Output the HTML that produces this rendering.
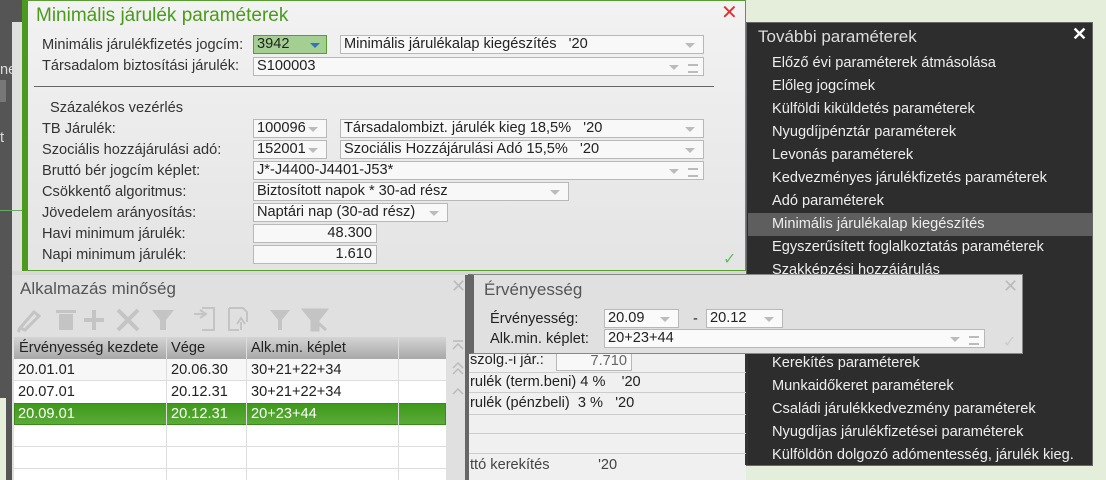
<!DOCTYPE html>
<html><head><meta charset="utf-8"><style>
*{box-sizing:border-box;margin:0;padding:0}
body{width:1106px;height:480px;overflow:hidden;position:relative;background:#e4eedb;font-family:"Liberation Sans",Arial,sans-serif;font-size:14.6px;color:#222}
.a{position:absolute;white-space:nowrap}
.inp{position:absolute;height:19px;background:#f8f8f8;border:1px solid #b8b8b8;font-size:14.6px;line-height:17px;padding-left:3px;white-space:nowrap;overflow:hidden}
.dd::after{content:"";position:absolute;right:8px;top:7px;border-left:5px solid transparent;border-right:5px solid transparent;border-top:5px solid #bbb}
.eq::before{content:"";position:absolute;right:5px;top:6px;width:10px;height:5px;border-top:2px solid #bbb;border-bottom:2px solid #bbb}
.dd.eq::after{right:24px}
.lbl{position:absolute;left:42px;font-size:14.6px;color:#333}
.m{position:absolute;left:772px;color:#eee;font-size:14.6px}
</style></head><body>
<div class="a" style="left:0;top:0;width:22px;height:480px;background:#555"></div>
<div class="a" style="left:12px;top:22px;width:10px;height:258px;background:#e0e0e0"></div>
<div class="a" style="left:0;top:80px;width:6px;height:22px;background:#777"></div>
<div class="a" style="left:0;top:210px;width:22px;height:1px;background:#6a6"></div>
<div class="a" style="left:0;top:398px;width:6px;height:82px;background:#e4eedb"></div>
<div class="a" style="left:0;top:62px;color:#ddd">ne</div>
<div class="a" style="left:0;top:130px;color:#ddd">t</div>

<div class="a" style="left:22px;top:0;width:724px;height:271px;background:linear-gradient(#f2f2f2,#e4e4e4);border:1px solid #5a9e32;border-left:6px solid #4a9a1e"></div>
<div class="a" style="left:36px;top:5px;font-size:19px;color:#4a9a1e">Minimális járulék paraméterek</div>
<div class="a" style="left:721px;top:2px;font-size:20px;color:#d33;line-height:22px">✕</div>
<div class="lbl" style="top:37px">Minimális járulékfizetés jogcím:</div>
<div class="lbl" style="top:58px">Társadalom biztosítási járulék:</div>
<div class="a" style="left:34px;top:86px;width:680px;height:1px;background:#666"></div>
<div class="lbl" style="left:50px;top:100px">Százalékos vezérlés</div>
<div class="lbl" style="top:121px">TB Járulék:</div>
<div class="lbl" style="top:142px">Szociális hozzájárulási adó:</div>
<div class="lbl" style="top:163px">Bruttó bér jogcím képlet:</div>
<div class="lbl" style="top:184px">Csökkentő algoritmus:</div>
<div class="lbl" style="top:205px">Jövedelem arányosítás:</div>
<div class="lbl" style="top:226px">Havi minimum járulék:</div>
<div class="lbl" style="top:247px">Napi minimum járulék:</div>

<div class="inp" style="left:253px;top:35px;width:74px;background:#a4cf92;border-color:#5a9e32">3942<span style="position:absolute;right:6px;top:7px;border-left:5px solid transparent;border-right:5px solid transparent;border-top:5px solid #3a6fc0"></span></div>
<div class="inp dd" style="left:340px;top:35px;width:364px">Minimális járulékalap kiegészítés &nbsp; '20</div>
<div class="inp dd eq" style="left:253px;top:57px;width:451px">S100003</div>
<div class="inp dd" style="left:253px;top:119px;width:74px">100096</div>
<div class="inp dd" style="left:340px;top:119px;width:364px">Társadalombizt. járulék kieg 18,5% &nbsp; '20</div>
<div class="inp dd" style="left:253px;top:140px;width:74px">152001</div>
<div class="inp dd" style="left:340px;top:140px;width:364px">Szociális Hozzájárulási Adó 15,5% &nbsp; '20</div>
<div class="inp dd eq" style="left:253px;top:161px;width:451px">J*-J4400-J4401-J53*</div>
<div class="inp dd" style="left:253px;top:182px;width:316px">Biztosított napok * 30-ad rész</div>
<div class="inp dd" style="left:253px;top:203px;width:195px">Naptári nap (30-ad rész)</div>
<div class="inp" style="left:253px;top:224px;width:124px;text-align:right;padding-right:4px">48.300</div>
<div class="inp" style="left:253px;top:245px;width:124px;text-align:right;padding-right:4px">1.610</div>
<div class="a" style="left:723px;top:249px;color:#6b6;font-size:16px">✓</div>

<div class="a" style="left:746px;top:22px;width:347px;height:444px;background:#2d2d2d;border:1px solid #666"></div>
<div class="a" style="left:758px;top:27px;color:#ddd;font-size:17px">További paraméterek</div>
<div class="a" style="left:1072px;top:24px;color:#fff;font-size:18px;font-weight:bold">✕</div>
<div class="a" style="left:748px;top:213px;width:344px;height:23px;background:#5e5e5e"></div>
<div class="m" style="top:55px">Előző évi paraméterek átmásolása</div>
<div class="m" style="top:78px">Előleg jogcímek</div>
<div class="m" style="top:101px">Külföldi kiküldetés paraméterek</div>
<div class="m" style="top:124px">Nyugdíjpénztár paraméterek</div>
<div class="m" style="top:147px">Levonás paraméterek</div>
<div class="m" style="top:170px">Kedvezményes járulékfizetés paraméterek</div>
<div class="m" style="top:193px">Adó paraméterek</div>
<div class="m" style="top:216px">Minimális járulékalap kiegészítés</div>
<div class="m" style="top:239px">Egyszerűsített foglalkoztatás paraméterek</div>
<div class="m" style="top:262px">Szakképzési hozzájárulás</div>
<div class="m" style="top:355px">Kerekítés paraméterek</div>
<div class="m" style="top:378px">Munkaidőkeret paraméterek</div>
<div class="m" style="top:401px">Családi járulékkedvezmény paraméterek</div>
<div class="m" style="top:424px">Nyugdíjas járulékfizetései paraméterek</div>
<div class="m" style="top:447px">Külföldön dolgozó adómentesség, járulék kieg.</div>

<div class="a" style="left:12px;top:271px;width:734px;height:4px;background:#d8d8d8"></div>

<div class="a" style="left:468px;top:353px;width:278px;height:127px;background:#f0f0f0"></div>
<div class="a" style="left:745px;top:353px;width:3px;height:112px;background:#333"></div>
<div class="a" style="left:470px;top:352px">szolg.-i jár.:</div>
<div class="inp" style="left:556px;top:352px;width:76px;text-align:right;padding-right:4px;color:#666">7.710</div>
<div class="a" style="left:468px;top:372px;width:278px;height:1px;background:#ccc"></div>
<div class="a" style="left:470px;top:374px">rulék (term.beni) 4 % &nbsp;&nbsp; '20</div>
<div class="a" style="left:468px;top:392px;width:278px;height:1px;background:#ccc"></div>
<div class="a" style="left:470px;top:395px">rulék (pénzbeli) &nbsp;3 % &nbsp; '20</div>
<div class="a" style="left:468px;top:414px;width:278px;height:1px;background:#ccc"></div>
<div class="a" style="left:468px;top:433px;width:278px;height:1px;background:#ccc"></div>
<div class="a" style="left:468px;top:453px;width:278px;height:1px;background:#ccc"></div>
<div class="a" style="left:470px;top:457px;color:#444">ttó kerekítés &nbsp;&nbsp;&nbsp;&nbsp;&nbsp;&nbsp;&nbsp;&nbsp;&nbsp;&nbsp; '20</div>

<div class="a" style="left:12px;top:275px;width:457px;height:205px;background:#e0e0e0;border-right:4px solid #666"></div>
<div class="a" style="left:20px;top:279px;font-size:17px;color:#555">Alkalmazás minőség</div>
<div class="a" style="left:451px;top:276px;font-size:18px;color:#bbb">✕</div>
<svg class="a" style="left:14px;top:302px" width="320" height="32" viewBox="0 0 320 32" fill="none" stroke="#c4c4c4" stroke-width="3">
<path d="M6 26 L20 10 L25 14 L11 28 Z M4 30 L7 25"/>
<rect x="45" y="12" width="14" height="16" fill="#c4c4c4" stroke="none"/><rect x="42" y="8" width="20" height="3" fill="#c4c4c4" stroke="none"/>
<path d="M80 8 V28 M70 18 H90" stroke-width="4"/>
<path d="M104 8 L124 28 M124 8 L104 28" stroke-width="4"/>
<path d="M138 8 H160 L152 18 V28 H146 V18 Z" fill="#c4c4c4" stroke="none"/>
<path d="M180 12 H192 M186 8 L192 12 L186 16 M188 6 H200 V28 H188" stroke-width="2"/>
<path d="M215 6 H229 L233 10 V20 M215 6 V28 H225 M227 28 V20 M223 22 L227 16 L231 22" stroke-width="2"/>
<path d="M256 8 H276 L268 18 V28 H264 V18 Z" fill="#c4c4c4" stroke="none"/>
<path d="M290 8 H312 L304 18 V28 H298 V18 Z M290 8 L312 28" fill="#c4c4c4" stroke="#c4c4c4"/>
</svg>
<div class="a" style="left:14px;top:337px;width:432px;height:22px;background:linear-gradient(#d4d4d4,#a8a8a8)"></div>
<div class="a" style="left:14px;top:359px;width:432px;height:121px;background:#fff"></div>
<div class="a" style="left:14px;top:359px;width:432px;height:22px;background:#f7f7f7"></div>
<div class="a" style="left:14px;top:403px;width:432px;height:22px;background:linear-gradient(#3f9a1a,#5aaa38);border:1px solid #3a8a1a"></div>
<div class="a" style="left:166px;top:337px;width:1px;height:143px;background:#ddd"></div>
<div class="a" style="left:246px;top:337px;width:1px;height:143px;background:#ddd"></div>
<div class="a" style="left:398px;top:337px;width:1px;height:143px;background:#ddd"></div>
<div class="a" style="left:14px;top:380px;width:432px;height:1px;background:#ddd"></div>
<div class="a" style="left:14px;top:446px;width:432px;height:1px;background:#ddd"></div>
<div class="a" style="left:14px;top:468px;width:432px;height:1px;background:#ddd"></div>
<div class="a" style="left:19px;top:340px">Érvényesség kezdete</div>
<div class="a" style="left:171px;top:340px">Vége</div>
<div class="a" style="left:251px;top:340px">Alk.min. képlet</div>
<div class="a" style="left:18px;top:362px">20.01.01</div><div class="a" style="left:171px;top:362px">20.06.30</div><div class="a" style="left:251px;top:362px">30+21+22+34</div>
<div class="a" style="left:18px;top:384px">20.07.01</div><div class="a" style="left:171px;top:384px">20.12.31</div><div class="a" style="left:251px;top:384px">30+21+22+34</div>
<div class="a" style="left:18px;top:406px;color:#fff">20.09.01</div><div class="a" style="left:171px;top:406px;color:#fff">20.12.31</div><div class="a" style="left:251px;top:406px;color:#fff">20+23+44</div>
<svg class="a" style="left:450px;top:338px" width="16" height="60" fill="none" stroke="#bbb" stroke-width="1.5"><path d="M3 3H13M3 11L8 6L13 11M3 30L8 25L13 30M3 36L8 31L13 36M3 56L8 51L13 56"/></svg>

<div class="a" style="left:468px;top:274px;width:555px;height:80px;background:#e0e0e0;border:1px solid #888;border-left:6px solid #666"></div>
<div class="a" style="left:484px;top:280px;font-size:17px;color:#555">Érvényesség</div>
<div class="a" style="left:1003px;top:276px;font-size:18px;color:#bbb">✕</div>
<div class="a" style="left:490px;top:311px">Érvényesség:</div>
<div class="a" style="left:490px;top:331px">Alk.min. képlet:</div>
<div class="inp dd" style="left:604px;top:309px;width:75px;background:#fafafa">20.09</div>
<div class="a" style="left:693px;top:311px">-</div>
<div class="inp dd" style="left:706px;top:309px;width:77px;background:#fafafa">20.12</div>
<div class="inp dd eq" style="left:604px;top:329px;width:381px;background:#fafafa">20+23+44</div>
<div class="a" style="left:1003px;top:332px;color:#ccc;font-size:16px">✓</div>
</body></html>
